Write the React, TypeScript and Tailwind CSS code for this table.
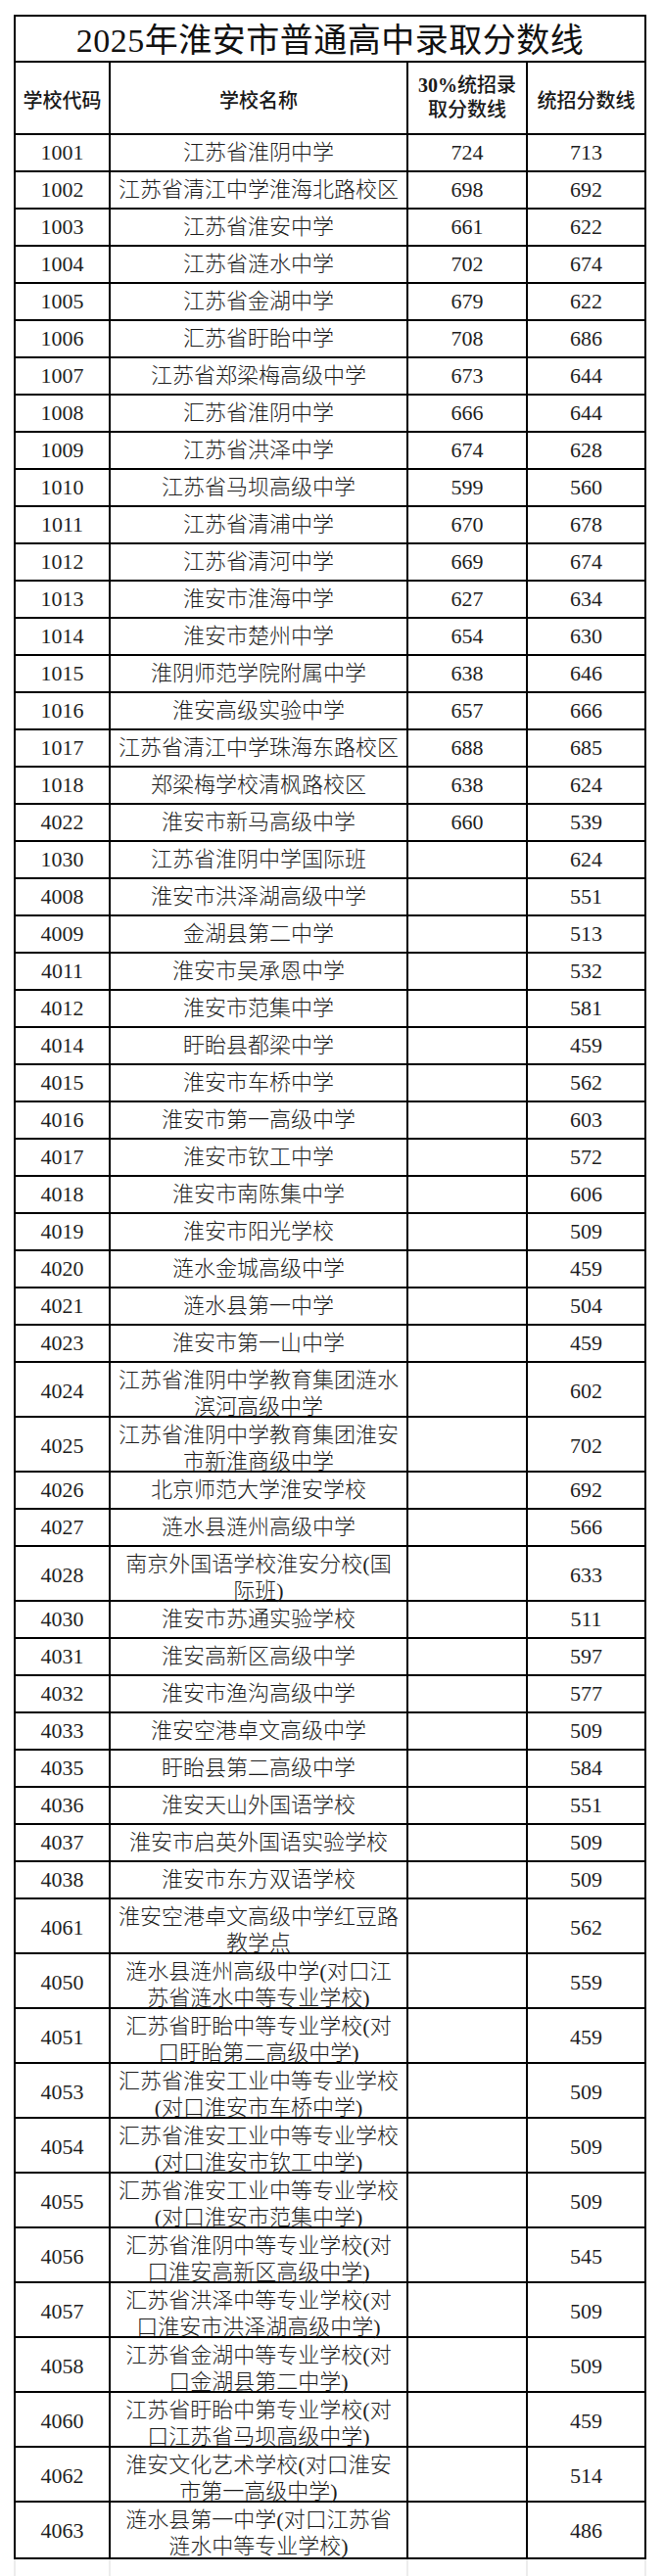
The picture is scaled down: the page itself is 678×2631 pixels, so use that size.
import React from 'react';

type Row = {
  code: string;
  name: string[];
  quota?: string;
  score: string;
};

const rows: Row[] = [
  { code: '1001', name: ['江苏省淮阴中学'], quota: '724', score: '713' },
  { code: '1002', name: ['江苏省清江中学淮海北路校区'], quota: '698', score: '692' },
  { code: '1003', name: ['江苏省淮安中学'], quota: '661', score: '622' },
  { code: '1004', name: ['江苏省涟水中学'], quota: '702', score: '674' },
  { code: '1005', name: ['江苏省金湖中学'], quota: '679', score: '622' },
  { code: '1006', name: ['汇苏省盱眙中学'], quota: '708', score: '686' },
  { code: '1007', name: ['江苏省郑梁梅高级中学'], quota: '673', score: '644' },
  { code: '1008', name: ['汇苏省淮阴中学'], quota: '666', score: '644' },
  { code: '1009', name: ['江苏省洪泽中学'], quota: '674', score: '628' },
  { code: '1010', name: ['江苏省马坝高级中学'], quota: '599', score: '560' },
  { code: '1011', name: ['江苏省清浦中学'], quota: '670', score: '678' },
  { code: '1012', name: ['江苏省清河中学'], quota: '669', score: '674' },
  { code: '1013', name: ['淮安市淮海中学'], quota: '627', score: '634' },
  { code: '1014', name: ['淮安市楚州中学'], quota: '654', score: '630' },
  { code: '1015', name: ['淮阴师范学院附属中学'], quota: '638', score: '646' },
  { code: '1016', name: ['淮安高级实验中学'], quota: '657', score: '666' },
  { code: '1017', name: ['江苏省清江中学珠海东路校区'], quota: '688', score: '685' },
  { code: '1018', name: ['郑梁梅学校清枫路校区'], quota: '638', score: '624' },
  { code: '4022', name: ['淮安市新马高级中学'], quota: '660', score: '539' },
  { code: '1030', name: ['江苏省淮阴中学国际班'], score: '624' },
  { code: '4008', name: ['淮安市洪泽湖高级中学'], score: '551' },
  { code: '4009', name: ['金湖县第二中学'], score: '513' },
  { code: '4011', name: ['淮安市吴承恩中学'], score: '532' },
  { code: '4012', name: ['淮安市范集中学'], score: '581' },
  { code: '4014', name: ['盱眙县都梁中学'], score: '459' },
  { code: '4015', name: ['淮安市车桥中学'], score: '562' },
  { code: '4016', name: ['淮安市第一高级中学'], score: '603' },
  { code: '4017', name: ['淮安市钦工中学'], score: '572' },
  { code: '4018', name: ['淮安市南陈集中学'], score: '606' },
  { code: '4019', name: ['淮安市阳光学校'], score: '509' },
  { code: '4020', name: ['涟水金城高级中学'], score: '459' },
  { code: '4021', name: ['涟水县第一中学'], score: '504' },
  { code: '4023', name: ['淮安市第一山中学'], score: '459' },
  { code: '4024', name: ['江苏省淮阴中学教育集团涟水', '滨河高级中学'], score: '602' },
  { code: '4025', name: ['江苏省淮阴中学教育集团淮安', '市新淮商级中学'], score: '702' },
  { code: '4026', name: ['北京师范大学淮安学校'], score: '692' },
  { code: '4027', name: ['涟水县涟州高级中学'], score: '566' },
  { code: '4028', name: ['南京外国语学校淮安分校(国', '际班)'], score: '633' },
  { code: '4030', name: ['淮安市苏通实验学校'], score: '511' },
  { code: '4031', name: ['淮安高新区高级中学'], score: '597' },
  { code: '4032', name: ['淮安市渔沟高级中学'], score: '577' },
  { code: '4033', name: ['淮安空港卓文高级中学'], score: '509' },
  { code: '4035', name: ['盱眙县第二高级中学'], score: '584' },
  { code: '4036', name: ['淮安天山外国语学校'], score: '551' },
  { code: '4037', name: ['淮安市启英外国语实验学校'], score: '509' },
  { code: '4038', name: ['淮安市东方双语学校'], score: '509' },
  { code: '4061', name: ['淮安空港卓文高级中学红豆路', '教学点'], score: '562' },
  { code: '4050', name: ['涟水县涟州高级中学(对口江', '苏省涟水中等专业学校)'], score: '559' },
  { code: '4051', name: ['汇苏省盱眙中等专业学校(对', '口盱眙第二高级中学)'], score: '459' },
  { code: '4053', name: ['汇苏省淮安工业中等专业学校', '(对口淮安市车桥中学)'], score: '509' },
  { code: '4054', name: ['汇苏省淮安工业中等专业学校', '(对口淮安市钦工中学)'], score: '509' },
  { code: '4055', name: ['汇苏省淮安工业中等专业学校', '(对口淮安市范集中学)'], score: '509' },
  { code: '4056', name: ['汇苏省淮阴中等专业学校(对', '口淮安高新区高级中学)'], score: '545' },
  { code: '4057', name: ['汇苏省洪泽中等专业学校(对', '口淮安市洪泽湖高级中学)'], score: '509' },
  { code: '4058', name: ['江苏省金湖中等专业学校(对', '口金湖县第二中学)'], score: '509' },
  { code: '4060', name: ['江苏省盱眙中第专业学校(对', '口江苏省马坝高级中学)'], score: '459' },
  { code: '4062', name: ['淮安文化艺术学校(对口淮安', '市第一高级中学)'], score: '514' },
  { code: '4063', name: ['涟水县第一中学(对口江苏省', '涟水中等专业学校)'], score: '486' },
];

const cols = 'grid grid-cols-[97px_304px_122px_119px]';
const cell = 'flex flex-col items-center justify-center';

export default function App() {
  return (
    <div className="min-h-screen bg-white pt-[15px] pl-[14px] font-['Liberation_Serif','Noto_Sans_CJK_SC',serif] text-[#1e1e1e]">
      <div className="w-[646px] border-2 border-black">
        {/* Title */}
        <div className="flex h-[47px] items-center justify-center border-b-2 border-black pt-[4px] text-[34px] leading-none tracking-[0.5px] text-[#111]">
          2025年淮安市普通高中录取分数线
        </div>

        {/* Header */}
        <div className={`${cols} h-[74px] border-b-2 border-black text-[20px] font-medium leading-[25px] text-[#1a1a1a]`}>
          <div className={`${cell} border-r-2 border-black pt-[6px]`}>学校代码</div>
          <div className={`${cell} border-r-2 border-black pt-[6px]`}>学校名称</div>
          <div className={`${cell} border-r-2 border-black`}>
            <span>
              <span className="font-bold">30%</span>统招录
            </span>
            <span>取分数线</span>
          </div>
          <div className={`${cell} pt-[6px]`}>统招分数线</div>
        </div>

        {/* Body */}
        {rows.map((r, i) => {
          const last = i === rows.length - 1;
          const tall = r.name.length > 1;
          return (
            <div
              key={r.code}
              className={`${cols} ${tall ? 'h-[56px]' : 'h-[38px]'} ${last ? '' : 'border-b-2 border-black'} text-[22px] font-light`}
            >
              <div className={`${cell} border-r-2 border-black leading-none`}>{r.code}</div>
              <div className={`${cell} border-r-2 border-black ${tall ? 'pt-[4px] leading-[27px]' : 'leading-none'}`}>
                {r.name.map((line) => (
                  <span key={line} className="whitespace-nowrap">
                    {line}
                  </span>
                ))}
              </div>
              <div className={`${cell} border-r-2 border-black leading-none`}>{r.quota ?? ''}</div>
              <div className={`${cell} leading-none`}>{r.score}</div>
            </div>
          );
        })}
      </div>

      {/* faint continuation below the table */}
      <div className={`${cols} h-[19px] w-[646px] border-x-2 border-[#ececec]`}>
        <div className="border-r-2 border-[#ececec]" />
        <div className="border-r-2 border-[#ececec]" />
        <div className="border-r-2 border-[#ececec]" />
        <div />
      </div>
    </div>
  );
}
